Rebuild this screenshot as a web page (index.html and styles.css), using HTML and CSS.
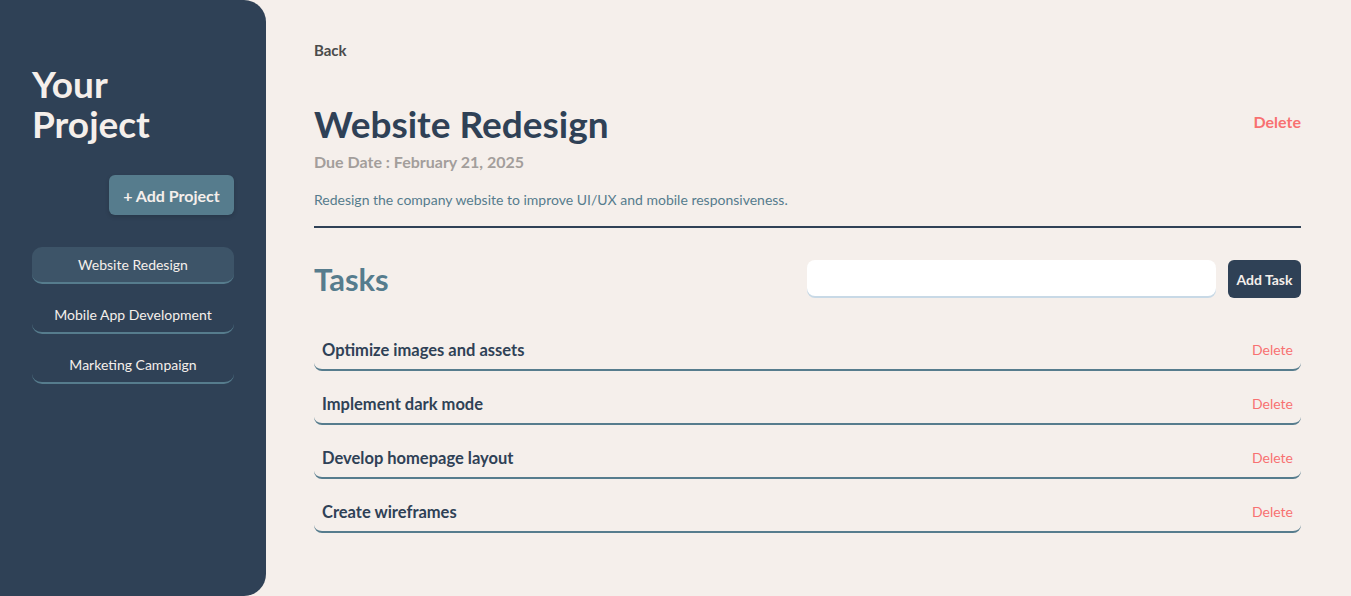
FILE: index.html
```html
<!DOCTYPE html>
<html lang="en">
<head>
<meta charset="utf-8">
<title>Your Project</title>
<link rel="stylesheet" href="styles.css">
</head>
<body>
<div class="app">
  <aside class="sidebar">
    <h2 class="sidebar-title"><span class="line">Your</span><span class="line">Project</span></h2>
    <div class="add-wrap"><button class="add-project">+ Add Project</button></div>
    <ul class="project-list">
      <li><button class="project-item active">Website Redesign</button></li>
      <li><button class="project-item">Mobile App Development</button></li>
      <li><button class="project-item">Marketing Campaign</button></li>
    </ul>
  </aside>
  <main class="main">
    <button class="back">Back</button>
    <header class="project-head">
      <div class="title-row">
        <h1 class="project-title">Website Redesign</h1>
        <button class="delete-project">Delete</button>
      </div>
      <p class="due">Due Date : February 21, 2025</p>
      <p class="desc">Redesign the company website to improve UI/UX and mobile responsiveness.</p>
    </header>
    <section class="tasks">
      <div class="tasks-head">
        <h2 class="tasks-title">Tasks</h2>
        <div class="task-form">
          <input class="task-input" type="text">
          <button class="add-task">Add Task</button>
        </div>
      </div>
      <ul class="task-list">
        <li class="task"><span>Optimize images and assets</span><button class="task-delete">Delete</button></li>
        <li class="task"><span>Implement dark mode</span><button class="task-delete">Delete</button></li>
        <li class="task"><span>Develop homepage layout</span><button class="task-delete">Delete</button></li>
        <li class="task"><span>Create wireframes</span><button class="task-delete">Delete</button></li>
      </ul>
    </section>
  </main>
</div>
</body>
</html>
```
FILE: styles.css
```css
* { box-sizing: border-box; }
html, body { margin: 0; height: 100%; }
body {
  font-family: "Lato", "Noto Sans", sans-serif;
  background: #f5efeb;
  color: #2f4156;
}
button { font-family: inherit; cursor: pointer; }
ul { list-style: none; margin: 0; padding: 0; }

.app { display: flex; height: 596px; }

.sidebar {
  width: 266px;
  flex: none;
  background: #2f4156;
  border-radius: 0 22px 22px 0;
  padding: 64px 32px 0 32px;
}
.sidebar-title {
  margin: 0;
  color: #f5efeb;
  font-size: 37px;
  font-weight: 700;
  display: flex;
  flex-direction: column;
}
.sidebar-title .line { display: block; height: 40px; line-height: 40px; }
.add-wrap { display: flex; justify-content: flex-end; margin-top: 31px; }
.add-project {
  background: #567c8d;
  color: #f5efeb;
  border: none;
  border-radius: 6px;
  height: 40px;
  width: 125px;
  font-size: 16px;
  font-weight: 700;
  box-shadow: 0 2px 4px rgba(0,0,0,0.15);
}
.project-list { margin-top: 32px; display: flex; flex-direction: column; gap: 13px; }
.project-item {
  width: 100%;
  height: 37px;
  background: transparent;
  border: none;
  border-bottom: 2px solid #567c8d;
  border-radius: 10px;
  color: #f5efeb;
  font-size: 14px;
}
.project-item.active { background: #3d5468; }

.main { flex: 1; padding: 38px 50px 0 48px; }
.back {
  background: none;
  border: none;
  padding: 0;
  font-size: 15px;
  font-weight: 700;
  color: #4b4b4b;
  height: 24px;
}
.project-head {
  margin-top: 38px;
  border-bottom: 2px solid #2f4156;
  padding-bottom: 16px;
}
.title-row { display: flex; justify-content: space-between; align-items: flex-start; }
.project-title {
  margin: 0;
  font-size: 37px;
  line-height: 48px;
  font-weight: 700;
  color: #2f4156;
}
.delete-project {
  background: none;
  border: none;
  padding: 0;
  margin-top: 12px;
  color: #f87171;
  font-size: 16px;
  font-weight: 700;
}
.due {
  margin: 3px 0 0;
  font-size: 16px;
  line-height: 22px;
  font-weight: 700;
  color: #a39e9b;
}
.desc {
  margin: 17px 0 0;
  font-size: 14px;
  line-height: 20px;
  color: #567c8d;
}

.tasks-head {
  display: flex;
  justify-content: space-between;
  align-items: center;
  margin-top: 32px;
}
.tasks-title {
  margin: 0;
  font-size: 31px;
  font-weight: 700;
  color: #567c8d;
}
.task-form { display: flex; gap: 12px; align-items: flex-start; }
.task-input {
  width: 409px;
  height: 36px;
  border: none;
  border-radius: 8px;
  background: #fff;
  box-shadow: 0 2px 0 #c8d9e6;
  outline: none;
}
.add-task {
  height: 38px;
  width: 73px;
  border: none;
  border-radius: 6px;
  background: #2f4156;
  color: #f5efeb;
  font-size: 14px;
  font-weight: 700;
  padding: 0;
}
.task-list { margin-top: 32px; display: flex; flex-direction: column; gap: 13px; }
.task {
  display: flex;
  justify-content: space-between;
  align-items: center;
  height: 41px;
  padding: 0 8px;
  border-bottom: 2px solid #567c8d;
  border-radius: 8px;
  font-size: 16.5px;
  font-weight: 700;
  color: #2f4156;
}
.task-delete {
  background: none;
  border: none;
  padding: 0;
  color: #f87171;
  font-size: 14px;
}
```
